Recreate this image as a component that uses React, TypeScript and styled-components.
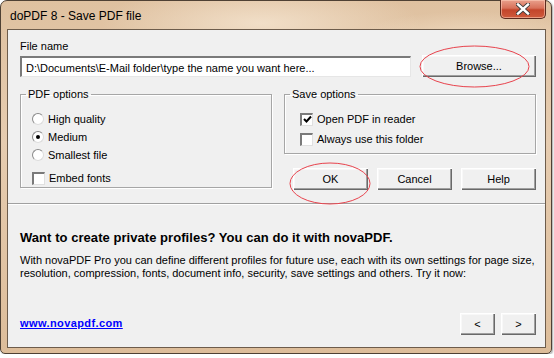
import React from "react";
import styled, { createGlobalStyle } from "styled-components";

const GlobalStyle = createGlobalStyle`
  html, body {
    margin: 0;
    padding: 0;
    background: #ffffff;
  }
  body {
    font-family: "Liberation Sans", Arial, sans-serif;
    font-size: 11px;
    color: #000;
  }
`;

/* ===================== WINDOW ===================== */

const Window = styled.div`
  position: relative;
  box-sizing: border-box;
  width: 552px;
  height: 354px;
  display: flex;
  flex-direction: column;
  padding: 0 5px 5px 6px;
  border: 1px solid #4f4134;
  border-radius: 7px 7px 5px 5px;
  background:
    radial-gradient(ellipse 160px 40px at 260px 22px, rgba(255, 245, 230, 0.55), transparent),
    radial-gradient(ellipse 120px 30px at 470px 40px, rgba(255, 240, 220, 0.5), transparent),
    linear-gradient(180deg, #dfc1a0 0%, #e6ccb0 40%, #ddbd9a 100%);
  box-shadow: 1px 1px 2px rgba(0, 0, 0, 0.35);
`;

const TitleBar = styled.div`
  height: 28px;
  display: flex;
  align-items: flex-start;
  justify-content: space-between;
`;

const Title = styled.span`
  font-family: "Liberation Sans", Arial, sans-serif;
  font-size: 12px;
  line-height: 14px;
  margin: 8px 0 0 3px;
  color: #000;
`;

const CloseButton = styled.div`
  box-sizing: border-box;
  width: 46px;
  height: 19px;
  margin-top: -1px;
  display: flex;
  align-items: center;
  justify-content: center;
  border: 1px solid #5b2a1e;
  border-top: none;
  border-radius: 0 0 5px 5px;
  background: linear-gradient(180deg, #e9a08c 0%, #d8715a 45%, #c3452b 55%, #cf5a3c 100%);
  box-shadow: inset 0 0 0 1px rgba(255, 210, 190, 0.55);
`;

const Client = styled.div`
  flex: 1;
  display: flex;
  flex-direction: column;
  border: 1px solid #6d5c4b;
  background: #f0f0f0;
`;

/* ===================== TOP ===================== */

const TopSection = styled.div`
  padding: 10px 9px 0 12px;
  height: 163px;
  box-sizing: border-box;
`;

const Label = styled.div`
  line-height: 13px;
`;

const FileRow = styled.div`
  display: flex;
  align-items: center;
  gap: 11px;
  margin-top: 2px;
  height: 22px;
`;

const TextInput = styled.div`
  box-sizing: border-box;
  flex: 1;
  height: 21px;
  padding: 3px 4px 0;
  background: #fff;
  border-top: 2px solid;
  border-left: 2px solid;
  border-bottom: 1px solid;
  border-right: 1px solid;
  border-color: #7a7a7a #e6e6e6 #e6e6e6 #7a7a7a;
  white-space: nowrap;
  overflow: hidden;
  line-height: 14px;
`;

const Button = styled.div<{ $w: number }>`
  box-sizing: border-box;
  width: ${({ $w }) => $w}px;
  height: 22px;
  display: flex;
  align-items: center;
  justify-content: center;
  background: #f0f0f0;
  box-shadow:
    inset 1px 1px 0 #ffffff,
    inset -1px -1px 0 #696969,
    inset -2px -2px 0 #a0a0a0,
    inset 2px 2px 0 #f8f8f8;
`;

const Options = styled.div`
  display: grid;
  grid-template-columns: 1fr 1fr;
  gap: 12px;
  margin-top: 11px;
`;

const Group = styled.fieldset<{ $h: number; $indent: number }>`
  box-sizing: border-box;
  margin: 0;
  height: ${({ $h }) => $h}px;
  padding: 9px 8px 0 ${({ $indent }) => $indent}px;
  border: 1px solid #a6a6a6;
  box-shadow: inset 1px 1px 0 #ffffff, 1px 1px 0 #ffffff;
  min-width: 0;
`;

const Legend = styled.legend<{ $shift: number }>`
  padding: 0 2px;
  margin-left: ${({ $shift }) => $shift}px;
  line-height: 13px;
`;

const Choice = styled.div<{ $gap?: number }>`
  display: flex;
  align-items: center;
  gap: 4px;
  height: 18px;
  margin-top: ${({ $gap }) => $gap ?? 0}px;
`;

const Radio = styled.span<{ $on?: boolean }>`
  box-sizing: border-box;
  width: 12px;
  height: 12px;
  border-radius: 50%;
  background: #fff;
  border: 1px solid;
  border-color: #8a8a8a #dcdcdc #dcdcdc #8a8a8a;
  display: flex;
  align-items: center;
  justify-content: center;

  &::after {
    content: "";
    width: 4px;
    height: 4px;
    border-radius: 50%;
    background: ${({ $on }) => ($on ? "#000" : "transparent")};
  }
`;

const Check = styled.span`
  box-sizing: border-box;
  width: 13px;
  height: 13px;
  background: #fff;
  border-top: 2px solid #7a7a7a;
  border-left: 2px solid #7a7a7a;
  border-right: 1px solid #e0e0e0;
  border-bottom: 1px solid #e0e0e0;
  display: flex;
  align-items: center;
  justify-content: center;
`;

const RightColumn = styled.div`
  display: flex;
  flex-direction: column;
  gap: 14px;
`;

const ButtonRow = styled.div`
  display: flex;
  justify-content: flex-end;
  gap: 9px;
`;

const Separator = styled.div`
  height: 0;
  border-top: 1px solid #a0a0a0;
  border-bottom: 1px solid #ffffff;
  margin-top: 10px;
`;

/* ===================== PROMO ===================== */

const Promo = styled.div`
  flex: 1;
  display: flex;
  flex-direction: column;
  padding: 25px 9px 12px 12px;
`;

const PromoTitle = styled.div`
  font-weight: bold;
  font-size: 13px;
  line-height: 15px;
  letter-spacing: 0.05px;
`;

const PromoText = styled.p`
  margin: 9px 0 0;
  line-height: 13px;
`;

const PromoFooter = styled.div`
  margin-top: auto;
  display: flex;
  align-items: center;
  justify-content: space-between;
`;

const Link = styled.a`
  color: #0000ff;
  font-weight: bold;
  font-size: 11px;
  letter-spacing: 0.4px;
  text-decoration: underline;
  margin-bottom: 3px;
`;

const NavButtons = styled.div`
  display: flex;
  gap: 6px;
`;

/* ===================== MARKS ===================== */

const Marks = styled.svg`
  position: absolute;
  left: -1px;
  top: -1px;
  pointer-events: none;
`;

const CheckMark = () => (
  <svg width="9" height="9" viewBox="0 0 9 9">
    <path d="M1 4 L3.5 6.5 L8 1.5" fill="none" stroke="#000" strokeWidth="2" />
  </svg>
);

const App: React.FC = () => {
  return (
    <>
      <GlobalStyle />
      <Window>
        <TitleBar>
          <Title>doPDF 8 - Save PDF file</Title>
          <CloseButton>
            <svg width="14" height="12" viewBox="0 0 14 12">
              <path
                d="M2 1.5 L12 10.5 M12 1.5 L2 10.5"
                stroke="#3a3a3a"
                strokeWidth="4.2"
                strokeLinecap="square"
              />
              <path
                d="M2 1.5 L12 10.5 M12 1.5 L2 10.5"
                stroke="#ffffff"
                strokeWidth="2.4"
                strokeLinecap="square"
              />
            </svg>
          </CloseButton>
        </TitleBar>

        <Client>
          <TopSection>
            <Label>File name</Label>
            <FileRow>
              <TextInput>D:\Documents\E-Mail folder\type the name you want here...</TextInput>
              <Button $w={114}>Browse...</Button>
            </FileRow>

            <Options>
              <Group $h={100} $indent={11}>
                <Legend $shift={-6}>PDF options</Legend>
                <Choice>
                  <Radio />
                  High quality
                </Choice>
                <Choice>
                  <Radio $on />
                  Medium
                </Choice>
                <Choice>
                  <Radio />
                  Smallest file
                </Choice>
                <Choice $gap={5}>
                  <Check />
                  Embed fonts
                </Choice>
              </Group>

              <RightColumn>
                <Group $h={66} $indent={15}>
                  <Legend $shift={-10}>Save options</Legend>
                  <Choice>
                    <Check>
                      <CheckMark />
                    </Check>
                    Open PDF in reader
                  </Choice>
                  <Choice $gap={2}>
                    <Check />
                    Always use this folder
                  </Choice>
                </Group>
                <ButtonRow>
                  <Button $w={75}>OK</Button>
                  <Button $w={75}>Cancel</Button>
                  <Button $w={75}>Help</Button>
                </ButtonRow>
              </RightColumn>
            </Options>
          </TopSection>

          <Separator />

          <Promo>
            <PromoTitle>
              Want to create private profiles? You can do it with novaPDF.
            </PromoTitle>
            <PromoText>
              With novaPDF Pro you can define different profiles for future use, each with its own
              settings for page size, resolution, compression, fonts, document info, security, save
              settings and others. Try it now:
            </PromoText>
            <PromoFooter>
              <Link href="#">www.novapdf.com</Link>
              <NavButtons>
                <Button $w={35}>&lt;</Button>
                <Button $w={35}>&gt;</Button>
              </NavButtons>
            </PromoFooter>
          </Promo>
        </Client>

        <Marks width="554" height="358" viewBox="0 0 554 358">
          <ellipse cx="474.5" cy="66.5" rx="54.5" ry="20.5" fill="none" stroke="#e8434d" strokeWidth="1" />
          <ellipse cx="330" cy="183.5" rx="40" ry="20.5" fill="none" stroke="#e8434d" strokeWidth="1" />
        </Marks>
      </Window>
    </>
  );
};

export default App;
